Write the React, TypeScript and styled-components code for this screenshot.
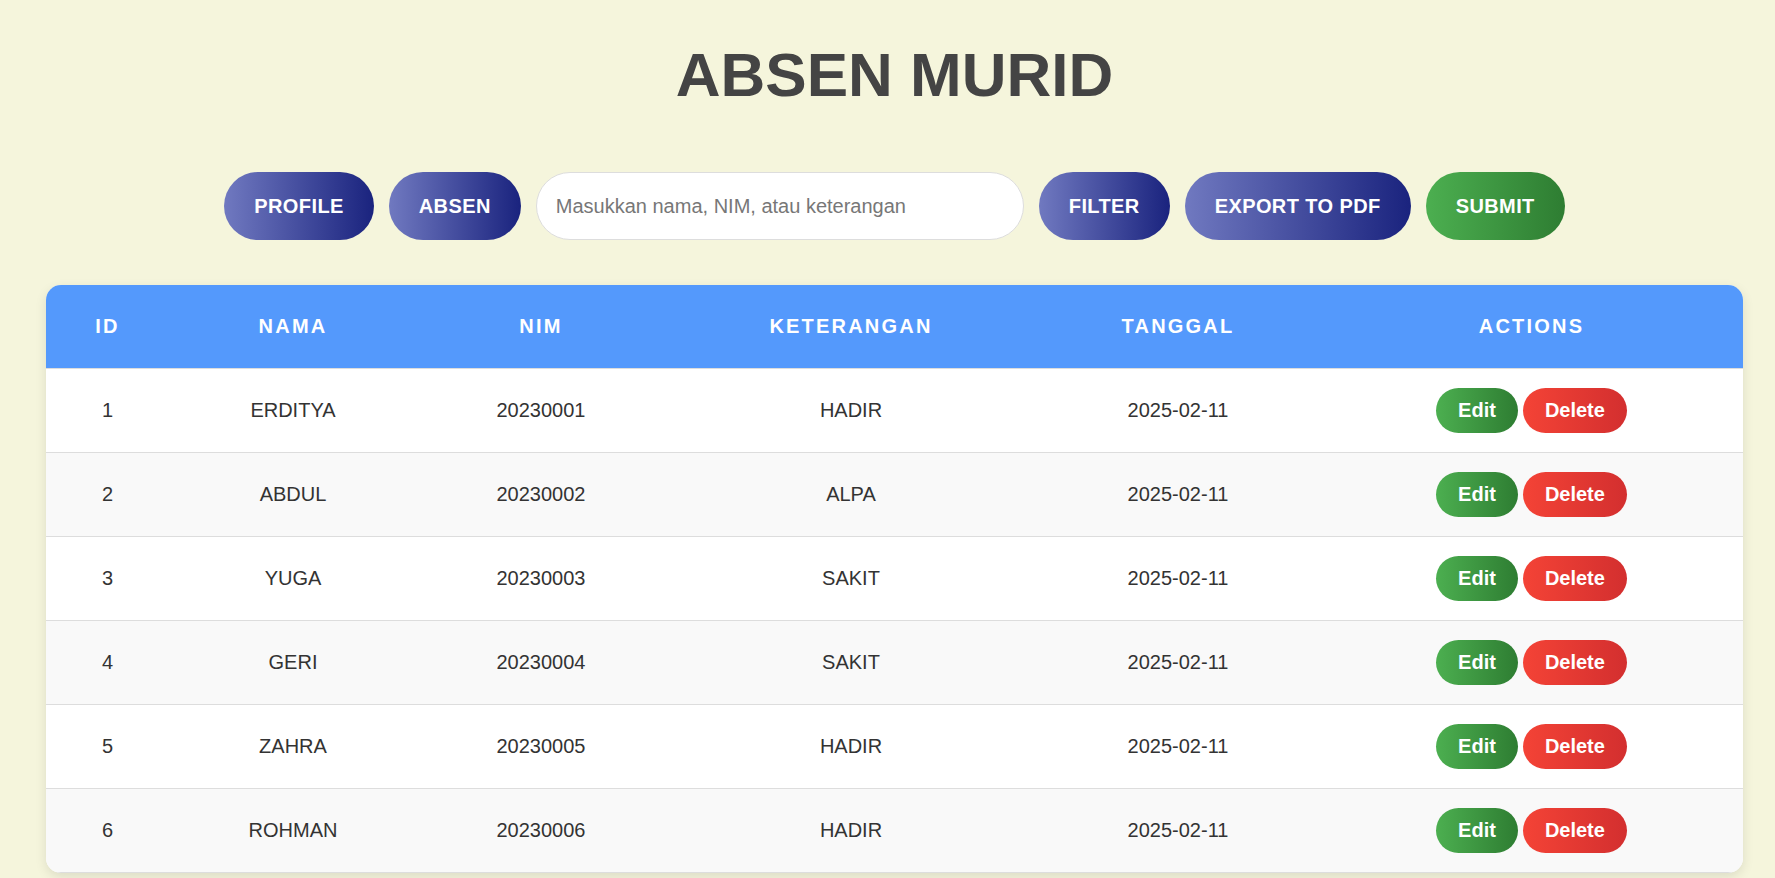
import React from "react";
import styled, { createGlobalStyle } from "styled-components";

const GlobalStyle = createGlobalStyle`
  html, body {
    margin: 0;
    padding: 0;
    background: #f5f5dc;
    font-family: "Liberation Sans", Arial, sans-serif;
  }
  * { box-sizing: border-box; }
`;

const Page = styled.div`
  padding: 40px 32px 40px 46px;
`;

const Title = styled.h1`
  margin: 0;
  text-align: center;
  font-size: 62px;
  line-height: 70px;
  font-weight: 700;
  color: #444;
`;

const Controls = styled.div`
  margin-top: 62px;
  display: flex;
  justify-content: center;
  align-items: center;
  gap: 15px;
`;

const PillButton = styled.button<{ $variant?: "blue" | "green" }>`
  height: 68px;
  padding: 0 30px;
  border: none;
  border-radius: 34px;
  color: #fff;
  font-family: "Liberation Sans", Arial, sans-serif;
  font-size: 20px;
  font-weight: 700;
  letter-spacing: 0.4px;
  text-transform: uppercase;
  cursor: pointer;
  background: ${(p) =>
    p.$variant === "green"
      ? "linear-gradient(to right, #4caf50, #2e7d32)"
      : "linear-gradient(to right, #7079c0, #1a237e)"};
`;

const SearchInput = styled.input`
  width: 488px;
  height: 68px;
  padding: 0 19px;
  border: 1px solid #ddd;
  border-radius: 34px;
  background: #fff;
  font-family: "Liberation Sans", Arial, sans-serif;
  font-size: 20px;
  color: #333;
  outline: none;
  &::placeholder {
    color: #777;
  }
`;

const TableCard = styled.div`
  margin-top: 45px;
  border-radius: 15px;
  overflow: hidden;
  background: #fff;
  box-shadow: 0 4px 12px rgba(0, 0, 0, 0.1);
`;

const Table = styled.table`
  width: 100%;
  border-collapse: collapse;
  table-layout: fixed;
`;

const Col = styled.col<{ $w: number }>`
  width: ${(p) => p.$w}px;
`;

const HeadCell = styled.th`
  background: #5499fc;
  color: #fff;
  font-size: 20px;
  line-height: 23px;
  font-weight: 700;
  letter-spacing: 2.2px;
  text-transform: uppercase;
  text-align: center;
  padding: 30px 10px;
  border-bottom: 1px solid #ddd;
`;

const Row = styled.tr<{ $alt: boolean }>`
  background: ${(p) => (p.$alt ? "#f9f9f9" : "#fff")};
`;

const Cell = styled.td`
  text-align: center;
  vertical-align: middle;
  font-size: 20px;
  line-height: 23px;
  color: #333;
  padding: 19px 10px;
  border-bottom: 1px solid #ddd;
`;

const Actions = styled.div`
  display: flex;
  justify-content: center;
  gap: 5px;
`;

const SmallButton = styled.button<{ $variant: "edit" | "delete" }>`
  height: 45px;
  padding: 0 22px;
  border: none;
  border-radius: 23px;
  color: #fff;
  font-family: "Liberation Sans", Arial, sans-serif;
  font-size: 20px;
  font-weight: 700;
  cursor: pointer;
  background: ${(p) =>
    p.$variant === "edit"
      ? "linear-gradient(to right, #4caf50, #2e7d32)"
      : "linear-gradient(to right, #f44336, #d32f2f)"};
`;

const columns = [
  { label: "ID", w: 123 },
  { label: "Nama", w: 248 },
  { label: "NIM", w: 248 },
  { label: "Keterangan", w: 372 },
  { label: "Tanggal", w: 282 },
  { label: "Actions", w: 425 },
];

const data = [
  { id: 1, nama: "ERDITYA", nim: "20230001", ket: "HADIR", tgl: "2025-02-11" },
  { id: 2, nama: "ABDUL", nim: "20230002", ket: "ALPA", tgl: "2025-02-11" },
  { id: 3, nama: "YUGA", nim: "20230003", ket: "SAKIT", tgl: "2025-02-11" },
  { id: 4, nama: "GERI", nim: "20230004", ket: "SAKIT", tgl: "2025-02-11" },
  { id: 5, nama: "ZAHRA", nim: "20230005", ket: "HADIR", tgl: "2025-02-11" },
  { id: 6, nama: "ROHMAN", nim: "20230006", ket: "HADIR", tgl: "2025-02-11" },
];

export default function App() {
  return (
    <>
      <GlobalStyle />
      <Page>
        <Title>ABSEN MURID</Title>
        <Controls>
          <PillButton>Profile</PillButton>
          <PillButton>Absen</PillButton>
          <SearchInput placeholder="Masukkan nama, NIM, atau keterangan" />
          <PillButton>Filter</PillButton>
          <PillButton>Export to PDF</PillButton>
          <PillButton $variant="green">Submit</PillButton>
        </Controls>
        <TableCard>
          <Table>
            <colgroup>
              {columns.map((c) => (
                <Col key={c.label} $w={c.w} />
              ))}
            </colgroup>
            <thead>
              <tr>
                {columns.map((c) => (
                  <HeadCell key={c.label}>{c.label}</HeadCell>
                ))}
              </tr>
            </thead>
            <tbody>
              {data.map((r, i) => (
                <Row key={r.id} $alt={i % 2 === 1}>
                  <Cell>{r.id}</Cell>
                  <Cell>{r.nama}</Cell>
                  <Cell>{r.nim}</Cell>
                  <Cell>{r.ket}</Cell>
                  <Cell>{r.tgl}</Cell>
                  <Cell>
                    <Actions>
                      <SmallButton $variant="edit">Edit</SmallButton>
                      <SmallButton $variant="delete">Delete</SmallButton>
                    </Actions>
                  </Cell>
                </Row>
              ))}
            </tbody>
          </Table>
        </TableCard>
      </Page>
    </>
  );
}
